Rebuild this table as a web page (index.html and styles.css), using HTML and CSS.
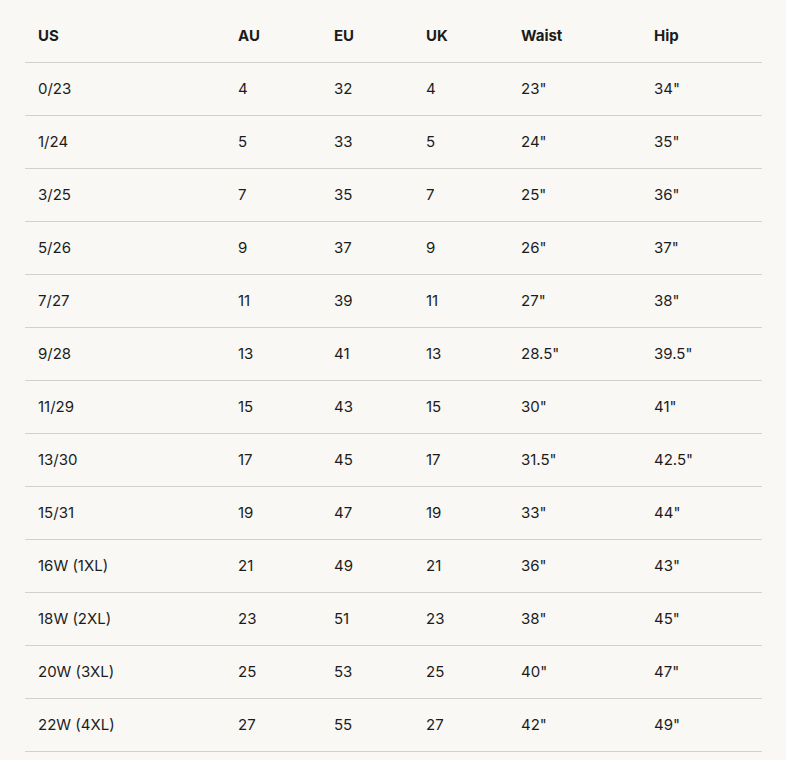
FILE: index.html
```html
<!DOCTYPE html>
<html>
<head>
<meta charset="utf-8">
<link rel="stylesheet" href="styles.css">
</head>
<body>
<div class="wrap">
<table class="size-table">
<colgroup>
<col class="c-us"><col class="c-au"><col class="c-eu"><col class="c-uk"><col class="c-waist"><col class="c-hip">
</colgroup>
<thead>
<tr><th>US</th><th>AU</th><th>EU</th><th>UK</th><th>Waist</th><th>Hip</th></tr>
</thead>
<tbody>
<tr><td>0/23</td><td>4</td><td>32</td><td>4</td><td>23"</td><td>34"</td></tr>
<tr><td>1/24</td><td>5</td><td>33</td><td>5</td><td>24"</td><td>35"</td></tr>
<tr><td>3/25</td><td>7</td><td>35</td><td>7</td><td>25"</td><td>36"</td></tr>
<tr><td>5/26</td><td>9</td><td>37</td><td>9</td><td>26"</td><td>37"</td></tr>
<tr><td>7/27</td><td>11</td><td>39</td><td>11</td><td>27"</td><td>38"</td></tr>
<tr><td>9/28</td><td>13</td><td>41</td><td>13</td><td>28.5"</td><td>39.5"</td></tr>
<tr><td>11/29</td><td>15</td><td>43</td><td>15</td><td>30"</td><td>41"</td></tr>
<tr><td>13/30</td><td>17</td><td>45</td><td>17</td><td>31.5"</td><td>42.5"</td></tr>
<tr><td>15/31</td><td>19</td><td>47</td><td>19</td><td>33"</td><td>44"</td></tr>
<tr><td>16W (1XL)</td><td>21</td><td>49</td><td>21</td><td>36"</td><td>43"</td></tr>
<tr><td>18W (2XL)</td><td>23</td><td>51</td><td>23</td><td>38"</td><td>45"</td></tr>
<tr><td>20W (3XL)</td><td>25</td><td>53</td><td>25</td><td>40"</td><td>47"</td></tr>
<tr><td>22W (4XL)</td><td>27</td><td>55</td><td>27</td><td>42"</td><td>49"</td></tr>
</tbody>
</table>
</div>
</body>
</html>
```
FILE: styles.css
```css
html, body {
  margin: 0;
  padding: 0;
  background: #f9f8f4;
}
body {
  font-family: "Inter", "Lato", sans-serif;
  color: #1c1c1c;
}
.wrap {
  padding: 8px 24px 0 25px;
}
.size-table {
  width: 737px;
  border-collapse: collapse;
  table-layout: fixed;
  font-size: 15px;
}
.c-us { width: 200px; }
.c-au { width: 96px; }
.c-eu { width: 92px; }
.c-uk { width: 95px; }
.c-waist { width: 133px; }
.c-hip { width: 121px; }
.size-table th,
.size-table td {
  text-align: left;
  padding: 0 0 0 13px;
  border-bottom: 1px solid #d4d1cc;
  white-space: nowrap;
}
.size-table th {
  height: 54px;
  font-weight: 700;
}
.size-table td {
  height: 50px;
  padding-bottom: 2px;
  font-weight: 400;
}
```
